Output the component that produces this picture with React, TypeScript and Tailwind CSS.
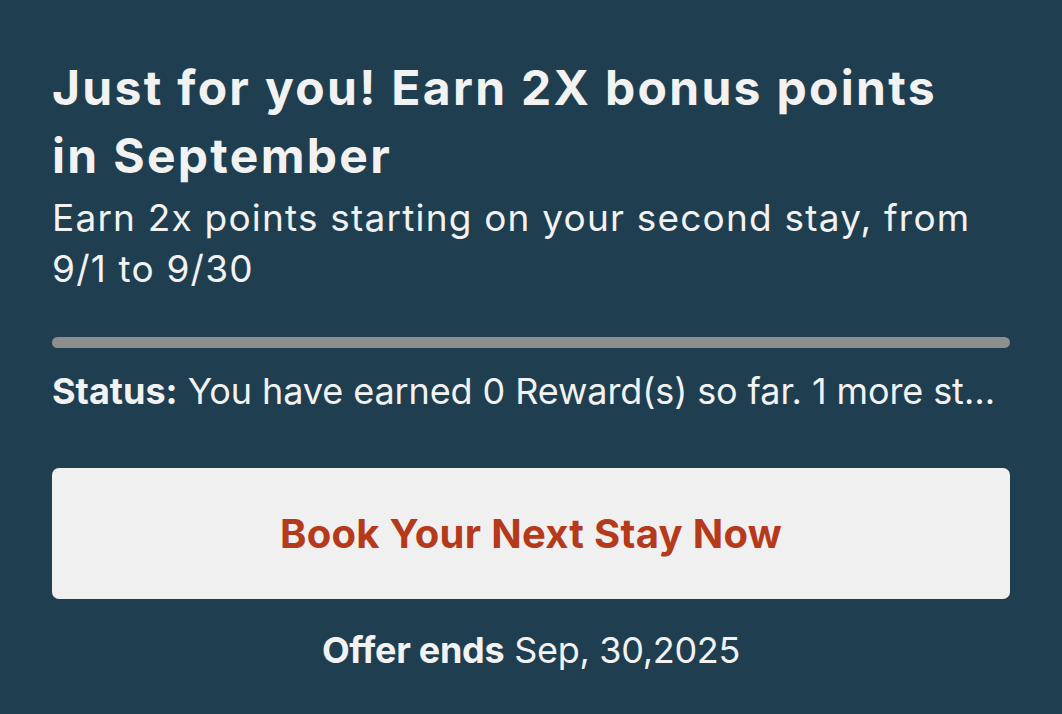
import React from "react";

// ── Offer card ────────────────────────────────────────────────────
export default function App() {
  return (
    <div
      className="w-[1062px] h-[714px] bg-[#1f3f51] text-[#f2f2f2] px-[52px] pt-[54px] overflow-hidden"
      style={{ fontFamily: "Inter, 'Noto Sans', sans-serif" }}
    >
      <h1 className="max-w-[940px] text-[48px] font-bold leading-[68px] tracking-[2.3px]">
        Just for you! Earn 2X bonus points in September
      </h1>
      <p className="mt-[2px] text-[37px] leading-[51px] tracking-[1.2px]">
        Earn 2x points starting on your second stay, from 9/1 to 9/30
      </p>

      <div className="mt-[43px] h-[11px] rounded-full bg-[#8e8e8e]" />

      <p className="mt-[21px] text-[36px] leading-[44px] truncate">
        <span className="font-bold">Status:</span>{" "}
        <span className="tracking-[-0.1px]">
          You have earned 0 Reward(s) so far. 1 more stay to earn your bonus
        </span>
      </p>

      <button className="mt-[55px] w-full h-[131px] rounded-[7px] bg-[#f0f0f0] text-[#b5391b] text-[40px] font-bold tracking-[0.3px]">
        Book Your Next Stay Now
      </button>

      <p className="mt-[29px] text-center text-[36px] leading-[44px] tracking-[-0.3px]">
        <span className="font-bold">Offer ends</span> Sep, 30,2025
      </p>
    </div>
  );
}
